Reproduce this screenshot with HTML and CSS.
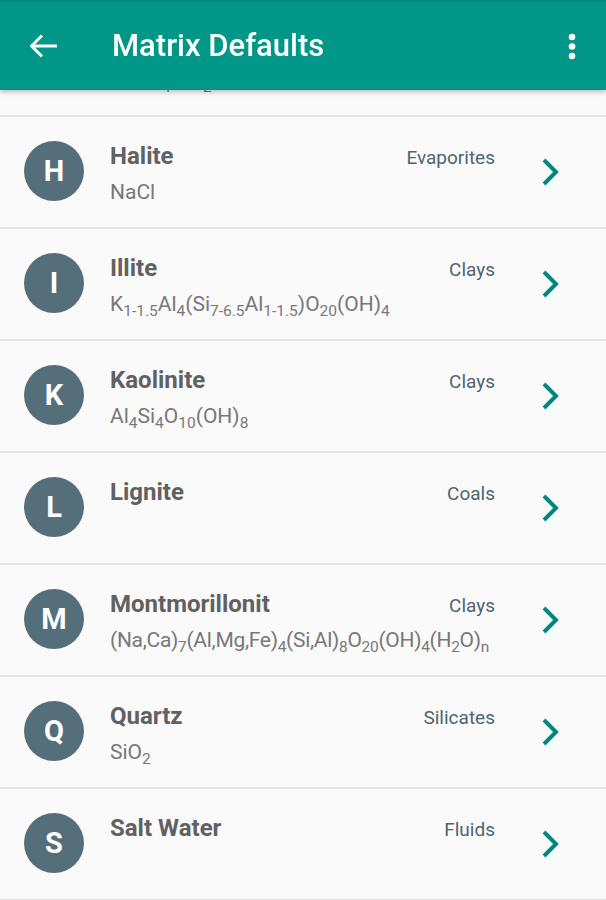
FILE: index.html
```html
<!DOCTYPE html>
<html lang="en">
<head>
    <meta charset="UTF-8">
    <meta name="viewport" content="width=device-width, initial-scale=1.0">
    <title>Matrix Defaults</title>
    <link rel="stylesheet" href="styles.css">
</head>
<body>
    <header class="toolbar">
        <button class="toolbar-btn back">
            <svg width="28" height="24" viewBox="0 0 28 24">
                <polyline points="12,1.5 1.5,12 12,22.5" fill="none" stroke="#fff" stroke-width="3"/>
                <line x1="1.5" y1="12" x2="27" y2="12" stroke="#fff" stroke-width="3"/>
            </svg>
        </button>
        <h1 class="toolbar-title">Matrix Defaults</h1>
        <button class="toolbar-btn more">
            <svg width="8" height="27" viewBox="0 0 8 27">
                <circle cx="4" cy="4" r="3.3" fill="#fff"/>
                <circle cx="4" cy="13.5" r="3.3" fill="#fff"/>
                <circle cx="4" cy="23" r="3.3" fill="#fff"/>
            </svg>
        </button>
    </header>

    <ul class="matrix-list">
        <li class="matrix-item">
            <div class="avatar">G</div>
            <div class="info">
                <div class="info-top">
                    <span class="name">Gypsum</span>
                    <span class="group">Evaporites</span>
                </div>
                <div class="formula">CaSO<sub>4</sub>·2H<sub>2</sub>O</div>
            </div>
            <svg class="chevron" width="20" height="28" viewBox="0 0 20 28"><polyline points="3,2 15,14 3,26"/></svg>
        </li>
        <li class="matrix-item">
            <div class="avatar">H</div>
            <div class="info">
                <div class="info-top">
                    <span class="name">Halite</span>
                    <span class="group">Evaporites</span>
                </div>
                <div class="formula">NaCl</div>
            </div>
            <svg class="chevron" width="20" height="28" viewBox="0 0 20 28"><polyline points="3,2 15,14 3,26"/></svg>
        </li>
        <li class="matrix-item">
            <div class="avatar">I</div>
            <div class="info">
                <div class="info-top">
                    <span class="name">Illite</span>
                    <span class="group">Clays</span>
                </div>
                <div class="formula">K<sub>1-1.5</sub>Al<sub>4</sub>(Si<sub>7-6.5</sub>Al<sub>1-1.5</sub>)O<sub>20</sub>(OH)<sub>4</sub></div>
            </div>
            <svg class="chevron" width="20" height="28" viewBox="0 0 20 28"><polyline points="3,2 15,14 3,26"/></svg>
        </li>
        <li class="matrix-item">
            <div class="avatar">K</div>
            <div class="info">
                <div class="info-top">
                    <span class="name">Kaolinite</span>
                    <span class="group">Clays</span>
                </div>
                <div class="formula">Al<sub>4</sub>Si<sub>4</sub>O<sub>10</sub>(OH)<sub>8</sub></div>
            </div>
            <svg class="chevron" width="20" height="28" viewBox="0 0 20 28"><polyline points="3,2 15,14 3,26"/></svg>
        </li>
        <li class="matrix-item">
            <div class="avatar">L</div>
            <div class="info">
                <div class="info-top">
                    <span class="name">Lignite</span>
                    <span class="group">Coals</span>
                </div>
            </div>
            <svg class="chevron" width="20" height="28" viewBox="0 0 20 28"><polyline points="3,2 15,14 3,26"/></svg>
        </li>
        <li class="matrix-item">
            <div class="avatar">M</div>
            <div class="info">
                <div class="info-top">
                    <span class="name">Montmorillonit</span>
                    <span class="group">Clays</span>
                </div>
                <div class="formula tight">(Na,Ca)<sub>7</sub>(Al,Mg,Fe)<sub>4</sub>(Si,Al)<sub>8</sub>O<sub>20</sub>(OH)<sub>4</sub>(H<sub>2</sub>O)<sub>n</sub></div>
            </div>
            <svg class="chevron" width="20" height="28" viewBox="0 0 20 28"><polyline points="3,2 15,14 3,26"/></svg>
        </li>
        <li class="matrix-item">
            <div class="avatar">Q</div>
            <div class="info">
                <div class="info-top">
                    <span class="name">Quartz</span>
                    <span class="group">Silicates</span>
                </div>
                <div class="formula">SiO<sub>2</sub></div>
            </div>
            <svg class="chevron" width="20" height="28" viewBox="0 0 20 28"><polyline points="3,2 15,14 3,26"/></svg>
        </li>
        <li class="matrix-item">
            <div class="avatar">S</div>
            <div class="info">
                <div class="info-top">
                    <span class="name">Salt Water</span>
                    <span class="group">Fluids</span>
                </div>
            </div>
            <svg class="chevron" width="20" height="28" viewBox="0 0 20 28"><polyline points="3,2 15,14 3,26"/></svg>
        </li>
    </ul>
</body>
</html>
```

FILE: styles.css
```css
* {
    margin: 0;
    padding: 0;
    box-sizing: border-box;
    font-family: 'Roboto', 'Noto Sans', sans-serif;
}

body {
    background-color: #fafafa;
    height: 900px;
    overflow: hidden;
}

/* top app bar sits over the scrolled list */
.toolbar {
    position: fixed;
    top: 0;
    left: 0;
    right: 0;
    height: 90px;
    display: flex;
    align-items: center;
    padding: 0 14px 0 24px;
    background: #009688;
    border-top: 2px solid #00897b;
    box-shadow: 0 2px 5px rgba(0,0,0,0.25);
    z-index: 10;
}

.toolbar-btn {
    width: 40px;
    height: 40px;
    display: flex;
    justify-content: center;
    align-items: center;
    background: none;
    border: none;
}

.toolbar-title {
    flex: 1;
    margin-left: 48px;
    color: #fff;
    font-size: 31px;
    font-weight: 500;
    line-height: 36px;
}

.matrix-list {
    list-style: none;
    padding-top: 5px;
}

.matrix-item {
    height: 112px;
    display: flex;
    align-items: center;
    padding: 0 45px 0 24px;
    border-bottom: 2px solid #e4e4e4;
}

.avatar {
    width: 60px;
    height: 60px;
    flex-shrink: 0;
    border-radius: 50%;
    background: #546e7a;
    color: #fff;
    font-size: 29px;
    font-weight: 700;
    display: flex;
    justify-content: center;
    align-items: center;
    margin-top: -2px;
}

.info {
    flex: 1;
    min-width: 0;
    align-self: flex-start;
    padding-top: 25px;
    margin-left: 26px;
    margin-right: 46px;
}

.info-top {
    display: flex;
    justify-content: space-between;
    align-items: baseline;
}

.name {
    color: #616161;
    font-size: 24px;
    font-weight: 700;
    line-height: 28px;
}

.group {
    color: #50646e;
    font-size: 19px;
    line-height: 28px;
}

.formula {
    margin-top: 7px;
    color: #787878;
    font-size: 21px;
    line-height: 26px;
    white-space: nowrap;
}

.formula sub {
    font-size: 15.5px;
    line-height: 1;
    vertical-align: -5px;
}

.formula.tight {
    letter-spacing: -0.3px;
}

.chevron {
    flex-shrink: 0;
    fill: none;
    stroke: #00897b;
    stroke-width: 4;
}
```
